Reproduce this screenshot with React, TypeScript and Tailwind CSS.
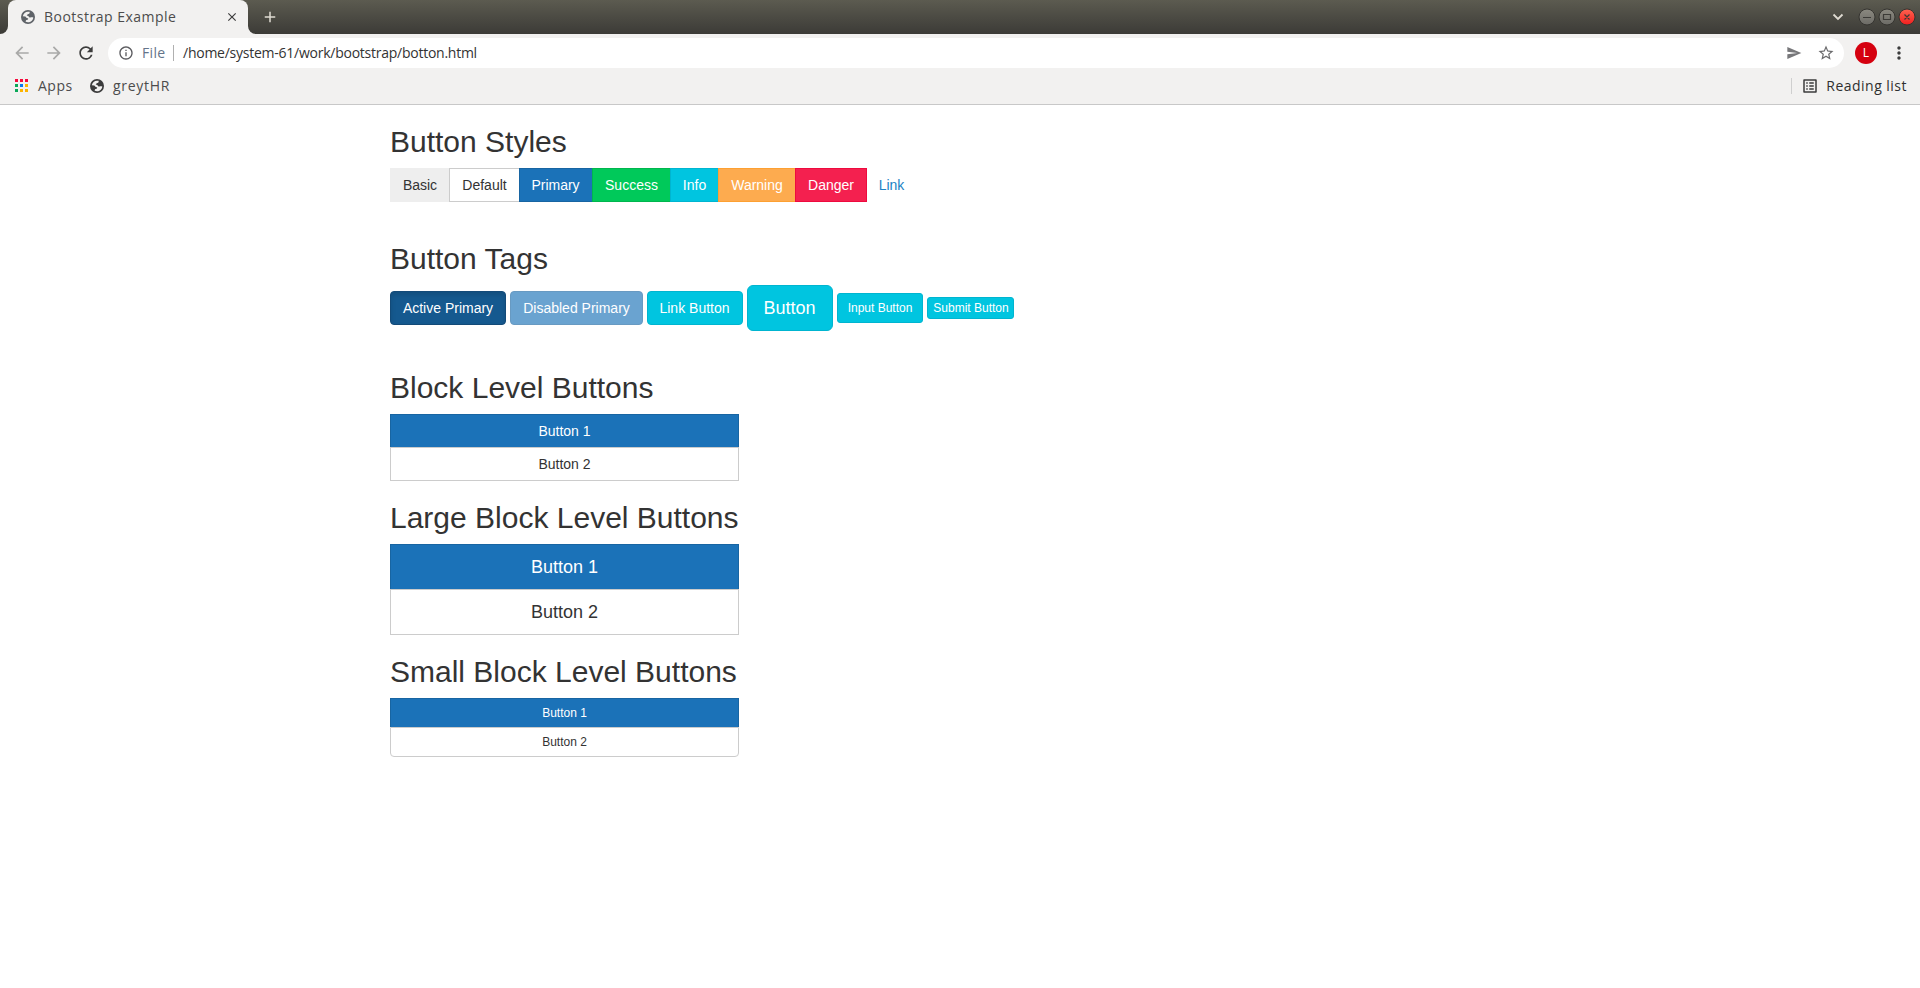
import React from "react";
import type { ReactNode } from "react";
import { MdArrowBack, MdArrowForward, MdRefresh, MdInfoOutline, MdStarOutline, MdSend, MdMoreVert, MdOutlineListAlt, MdClose, MdAdd } from "react-icons/md";

const ink = "[font-family:'Open_Sans','Noto_Sans',sans-serif]";

function Globe({ color }: { color: string }) {
  return (
    <svg viewBox="0 0 14 14" className="block size-[14px] shrink-0">
      <circle cx="7" cy="7" r="7" fill={color} />
      <path
        d="M8.6 1.7C8.9 2.9 8.5 3.6 7.4 3.9 6.2 4.2 6.3 5 5.6 5.6 6.9 5.8 7.6 6.2 8.2 7.2 9 7.6 10.2 7.2 12.3 7.4 12 10.2 9.8 12.3 7 12.3 6.1 12.3 5.3 12.1 4.6 11.8L5 10.2 7 9.6 7.2 8.4 5.4 7.8 4.4 6.6 1.8 6.2C2.3 3.6 4.4 1.7 7 1.7z"
        fill="#f2f1f0"
      />
    </svg>
  );
}

function AppsGrid() {
  const colors = ["#f50a3c", "#f50a3c", "#f50a3c", "#0aa858", "#0a78f0", "#fdb400", "#0aa858", "#fdb400", "#fdb400"];
  return (
    <div className="grid size-[13px] shrink-0 grid-cols-3 gap-[2px]">
      {colors.map((c, i) => (
        <span key={i} className="size-[3px]" style={{ backgroundColor: c }} />
      ))}
    </div>
  );
}

function WindowButtons() {
  return (
    <svg viewBox="0 0 62 20" className="block h-5 w-[62px] shrink-0">
      <defs>
        <linearGradient id="grey" x1="0" y1="0" x2="0" y2="1">
          <stop offset="0" stopColor="#8b8980" />
          <stop offset="1" stopColor="#6c6b66" />
        </linearGradient>
        <linearGradient id="red" x1="0" y1="0" x2="0" y2="1">
          <stop offset="0" stopColor="#ff6450" />
          <stop offset="1" stopColor="#f01e1e" />
        </linearGradient>
      </defs>
      <circle cx="9" cy="10" r="8" fill="url(#grey)" stroke="#353430" />
      <circle cx="29" cy="10" r="8" fill="url(#grey)" stroke="#353430" />
      <circle cx="49" cy="10" r="8" fill="url(#red)" stroke="#353430" />
      <path d="M5 10.5h8M25.5 7.5h7v5h-7zM46.5 7.5l5 5M51.5 7.5l-5 5" fill="none" stroke="#3c3b37" strokeWidth="1.2" />
    </svg>
  );
}

function Chrome() {
  return (
    <header className={"flex h-[105px] flex-col border-b border-[#c8c8c8] bg-[#f2f1f0] text-[14px] text-[#4c4c4c] " + ink}>
      <div className="flex h-[34px] shrink-0 items-stretch bg-linear-to-b from-[#5c5b50] to-[#3c3b37]">
        <div className="flex w-2 shrink-0 bg-[#f2f1f0]">
          <div className="w-2 rounded-br-[8px] bg-linear-to-b from-[#5c5b50] to-[#3c3b37]" />
        </div>
        <div className="flex w-[240px] shrink-0 items-center rounded-t-[8px] bg-[#f2f1f0] pl-[13px] pr-[9px]">
          <Globe color="#5f6368" />
          <span className="ml-[9px] flex-1 whitespace-nowrap pb-[2px] tracking-[0.49px]">Bootstrap Example</span>
          <MdClose className="size-[14px] text-[#3c3c3c]" />
        </div>
        <div className="flex w-2 shrink-0 bg-[#f2f1f0]">
          <div className="w-2 rounded-bl-[8px] bg-linear-to-b from-[#5c5b50] to-[#3c3b37]" />
        </div>
        <div className="flex flex-1 items-center pl-[5px]">
          <MdAdd className="size-[18px] text-[#dfdbd2]" />
          <svg viewBox="0 0 12 8" className="ml-auto mr-[14px] block h-2 w-3">
            <path d="M1.5 1.5l4.5 4.5 4.5-4.5" fill="none" stroke="#dfdbd2" strokeWidth="1.8" />
          </svg>
          <WindowButtons />
        </div>
      </div>
      <div className="flex h-[38px] shrink-0 items-center pl-[12px] pr-[11px]">
        <MdArrowBack className="size-5 text-[#a9a9a8]" />
        <MdArrowForward className="ml-3 size-5 text-[#a9a9a8]" />
        <MdRefresh className="ml-3 size-5 text-[#3c3c3c]" />
        <div className="ml-[12px] flex h-[30px] w-[1736px] items-center rounded-full bg-white pl-[10px] pr-[9px]">
          <MdInfoOutline className="size-4 text-[#5a5a5e]" />
          <span className="ml-[8px] w-[31px] pb-[2px] tracking-[0.35px] text-[#64748a]">File</span>
          <span className="h-4 w-px bg-[#b0b0b0]" />
          <span className="ml-[9px] whitespace-nowrap pb-[2px] tracking-[-0.25px] text-[#333]">/home/system-61/work/bootstrap/botton.html</span>
          <MdSend className="ml-auto size-4 text-[#77777a]" />
          <MdStarOutline className="ml-[15px] size-[18px] text-[#6a6a6c]" />
        </div>
        <div className="ml-[11px] flex size-[22px] items-center justify-center rounded-full bg-[#d5000f] text-[12px] text-white">L</div>
        <MdMoreVert className="ml-[12px] size-5 shrink-0 text-[#3c3c3c]" />
      </div>
      <div className="flex h-[28px] shrink-0 items-center pb-[1px] pl-[15px] pr-[13px]">
        <AppsGrid />
        <span className="ml-[10px] w-[52px] pb-px tracking-[0.5px]">Apps</span>
        <Globe color="#3c3c3c" />
        <span className="ml-[9px] pb-px tracking-[0.7px]">greytHR</span>
        <span className="ml-auto h-4 w-px bg-[#cfcfcf]" />
        <MdOutlineListAlt className="ml-[9px] size-[18px] text-[#3c3c3c]" />
        <span className="ml-[7px] whitespace-nowrap pb-px tracking-[0.48px] text-[#2f2f2f]">Reading list</span>
      </div>
    </header>
  );
}

const primary = "bg-[#1b72b8] border-[#1865a2] text-white";
const info = "bg-[#00c5e0] border-[#00b5d0] text-white";

function Heading({ children }: { children: ReactNode }) {
  return <h2 className="mb-[10px] mt-5 whitespace-nowrap text-[30px] leading-[33px] text-[#333]">{children}</h2>;
}

function Btn({ className, children }: { className: string; children: ReactNode }) {
  return (
    <button type="button" className={"flex shrink-0 items-center justify-center whitespace-nowrap border " + className}>
      {children}
    </button>
  );
}

const styles: [string, string][] = [
  ["Basic", "w-[59px] pl-px border-[#eee] bg-[#eee] text-[#333]"],
  ["Default", "w-[70px] border-r-0 border-[#ccc] bg-white text-[#333]"],
  ["Primary", "w-[73px] border-r-0 pr-px " + primary],
  ["Success", "w-[78px] border-r-0 border-[#00b64e] bg-[#00c95a] text-white"],
  ["Info", "w-[48px] border-r-0 " + info],
  ["Warning", "w-[77px] border-r-0 border-[#fda032] bg-[#fdab4f] text-white"],
  ["Danger", "w-[72px] border-[#ee0a3e] bg-[#f4204f] text-white"],
  ["Link", "w-[49px] border-transparent text-[#1b82c4]"],
];

export default function App() {
  return (
    <div className="h-[988px] w-full overflow-hidden bg-white">
      <Chrome />
      <main className="flex w-[1140px] flex-col items-start pl-[390px] text-[14px] leading-5 [font-family:'Liberation_Sans',Arial,sans-serif]">
        <Heading>Button Styles</Heading>
        <div className="flex h-[34px]">
          {styles.map(([label, cls]) => (
            <Btn key={label} className={cls}>{label}</Btn>
          ))}
        </div>
        <div className="h-5" />
        <Heading>Button Tags</Heading>
        <div className="flex h-[46px] items-center gap-1">
          <Btn className="h-[34px] w-[116px] rounded-[4px] border-[#134a78] bg-[#15598f] text-white shadow-[inset_0_3px_5px_rgba(0,0,0,0.125)]">Active Primary</Btn>
          <Btn className={"h-[34px] w-[133px] rounded-[4px] opacity-65 " + primary}>Disabled Primary</Btn>
          <Btn className={"h-[34px] w-[96px] rounded-[4px] pr-px " + info}>Link Button</Btn>
          <Btn className={"h-[46px] w-[86px] rounded-[6px] pr-px text-[18px] " + info}>Button</Btn>
          <Btn className={"h-[30px] w-[86px] rounded-[3px] text-[12px] " + info}>Input Button</Btn>
          <Btn className={"h-[22px] w-[87px] rounded-[3px] pl-px text-[12px] " + info}>Submit Button</Btn>
        </div>
        <div className="h-5" />
        <Heading>Block Level Buttons</Heading>
        <div className="flex w-[349px] flex-col">
          <Btn className={"h-[33px] border-b-0 " + primary}>Button 1</Btn>
          <Btn className="h-[34px] border-[#ccc] bg-white text-[#333]">Button 2</Btn>
        </div>
        <Heading>Large Block Level Buttons</Heading>
        <div className="flex w-[349px] flex-col text-[18px]">
          <Btn className={"h-[45px] border-b-0 " + primary}>Button 1</Btn>
          <Btn className="h-[46px] border-[#ccc] bg-white text-[#333]">Button 2</Btn>
        </div>
        <Heading>Small Block Level Buttons</Heading>
        <div className="flex w-[349px] flex-col text-[12px]">
          <Btn className={"h-[29px] border-b-0 " + primary}>Button 1</Btn>
          <Btn className="h-[30px] rounded-b-[4px] border-[#ccc] bg-white text-[#333]">Button 2</Btn>
        </div>
      </main>
    </div>
  );
}
